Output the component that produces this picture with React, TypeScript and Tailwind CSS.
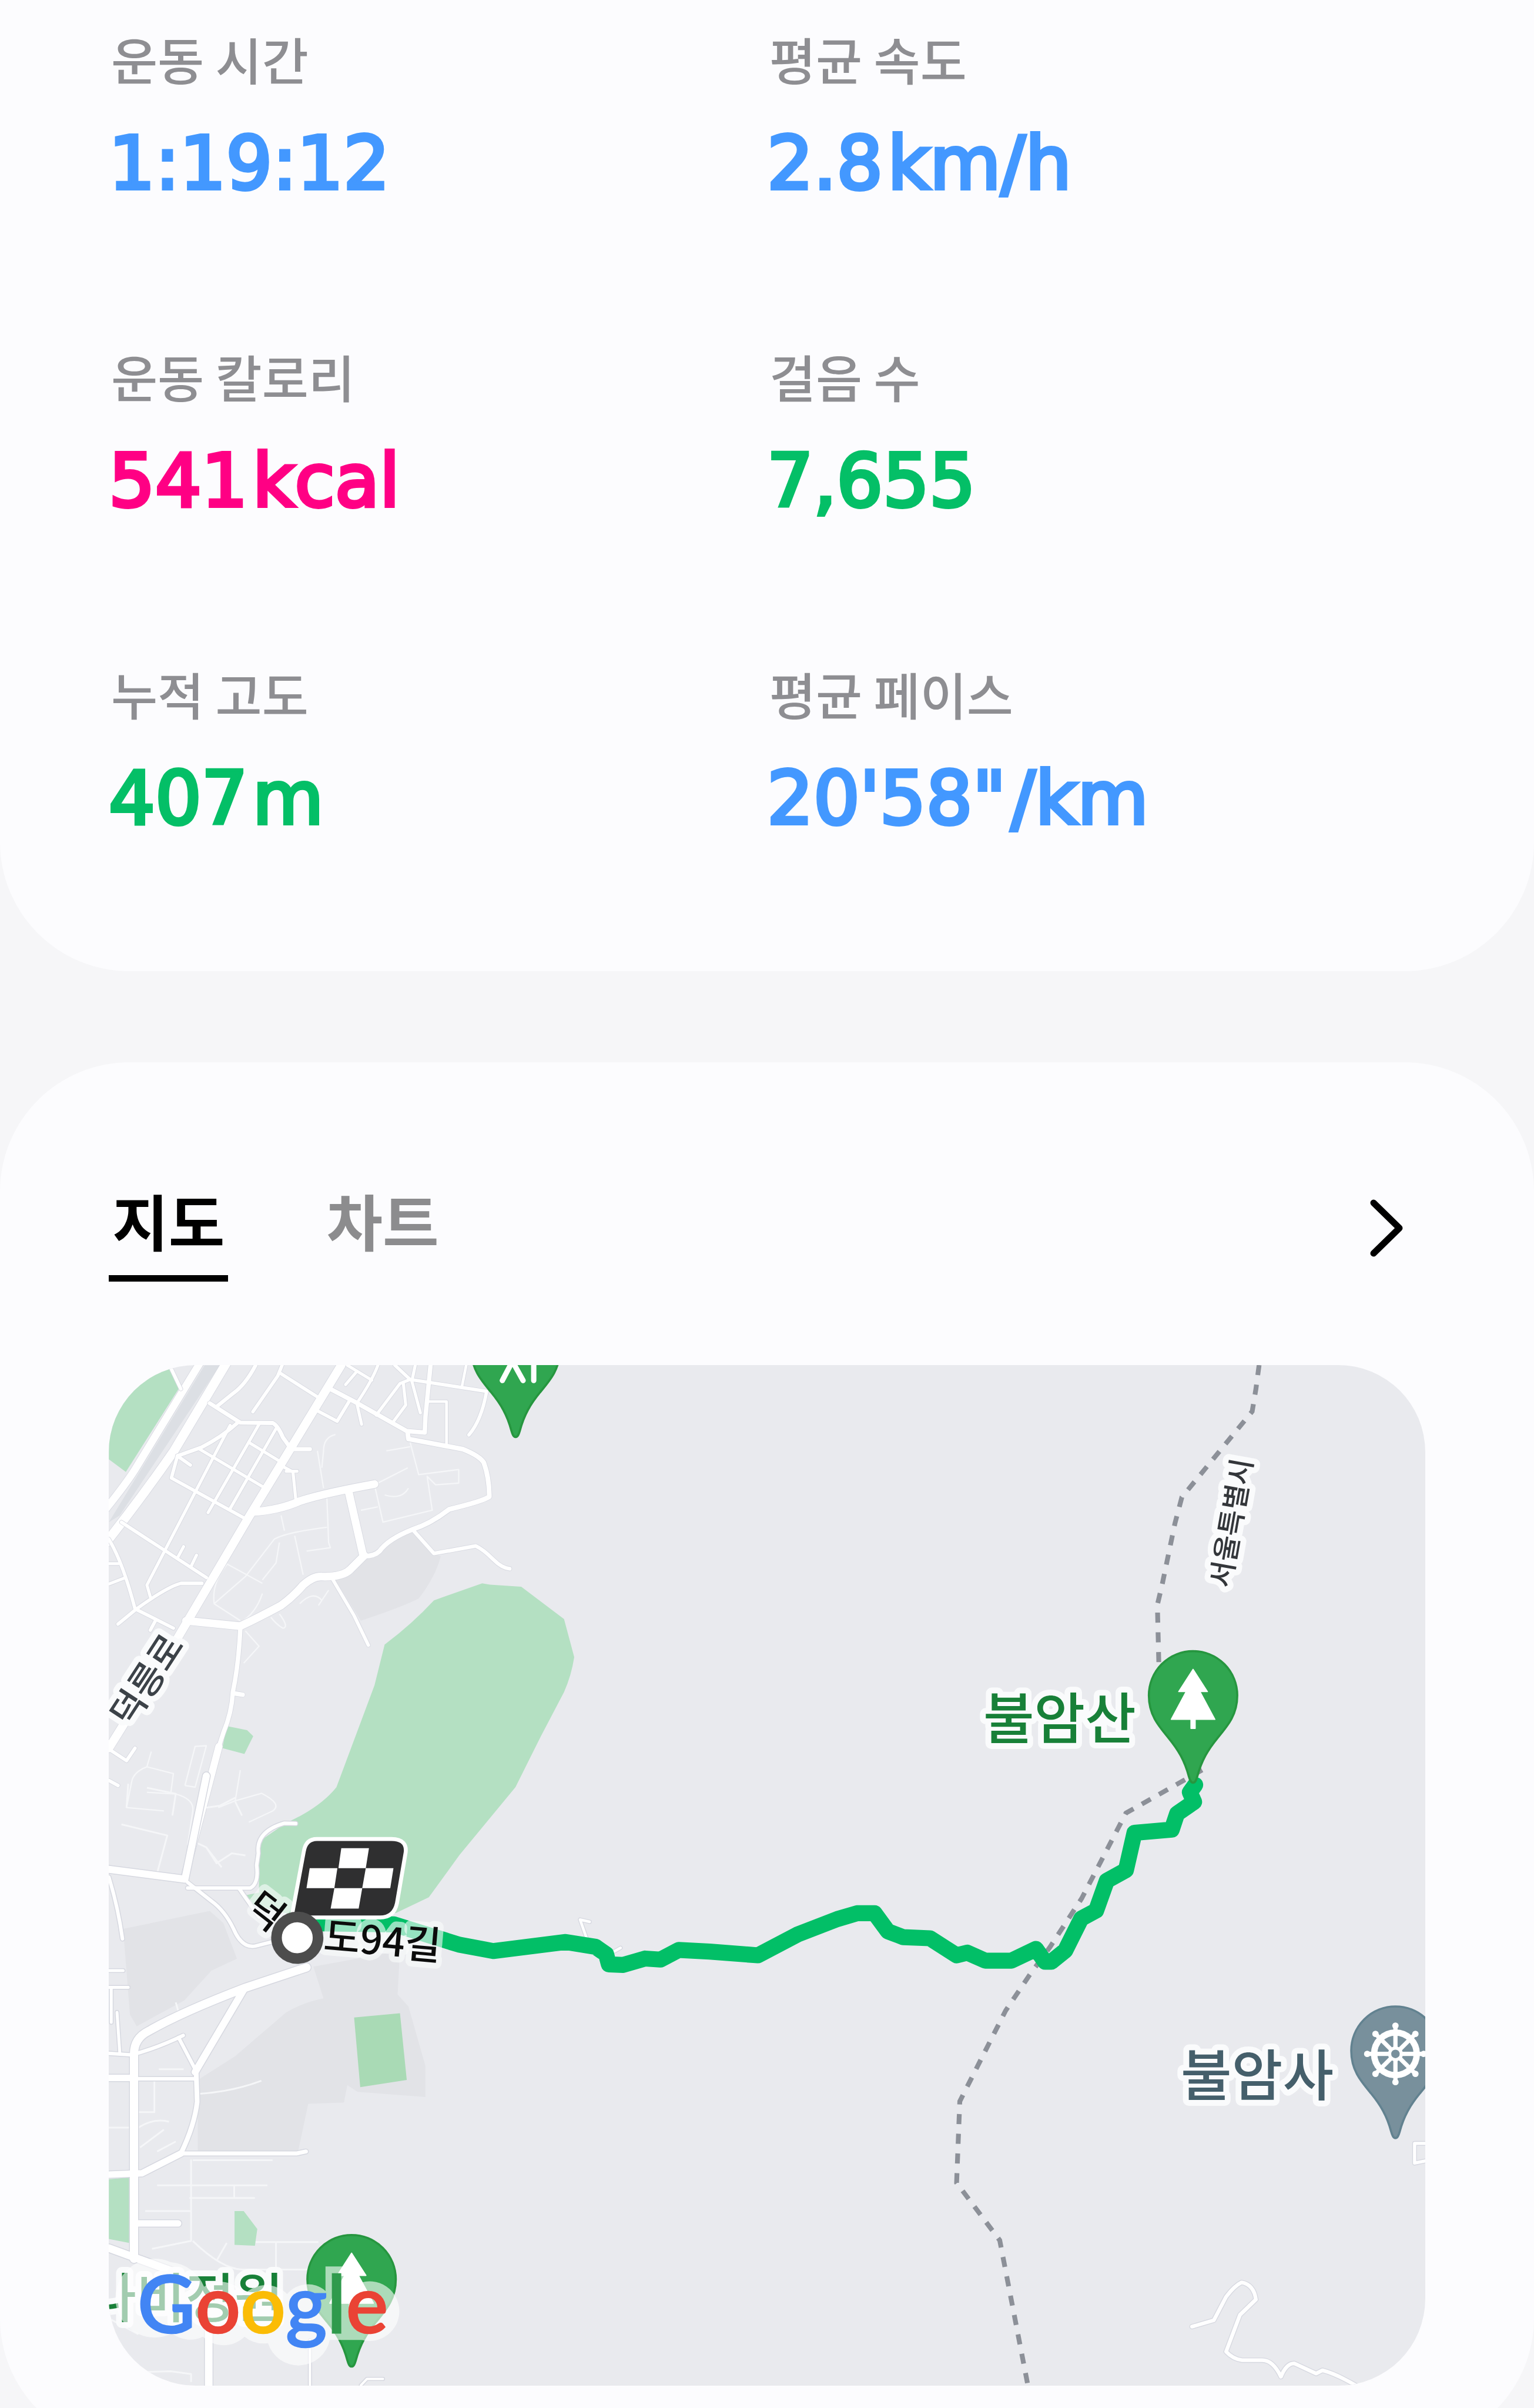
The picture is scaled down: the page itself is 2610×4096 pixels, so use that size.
import { useState } from "react";

type Road = { d: string; w: number };

const stats = [
  { label: "운동 시간", value: "1:19:12", color: "text-[#4398ff]" },
  { label: "평균 속도", value: "2.8", unit: "km/h", color: "text-[#4398ff]" },
  { label: "운동 칼로리", value: "541", unit: "kcal", color: "text-[#ff0084]" },
  { label: "걸음 수", value: "7,655", color: "text-[#04bf67]" },
  { label: "누적 고도", value: "407", unit: "m", color: "text-[#04bf67]" },
  { label: "평균 페이스", value: "20'58\"", unit: "/km", color: "text-[#4398ff]" },
];

const tabs = [
  { id: "map", label: "지도" },
  { id: "chart", label: "차트" },
];

const northRoads: Road[] = [
  { d: "M220 45L250 108", w: 10 },
  { d: "M470 38Q440 95 405 120L355 160", w: 11 },
  { d: "M548 38L535 70L462 175", w: 10 },
  { d: "M540 60L650 130", w: 10 },
  { d: "M335 150L425 207L520 208Q535 215 550 250L575 285H630", w: 12 },
  { d: "M420 205Q370 250 310 280L240 305", w: 11 },
  { d: "M395 215L345 310L150 685L160 720", w: 9 },
  { d: "M480 212L330 472", w: 9 },
  { d: "M530 225L395 460", w: 9 },
  { d: "M450 265L540 320", w: 9 },
  { d: "M305 285L490 395", w: 9 },
  { d: "M240 305L222 370L435 487", w: 10 },
  { d: "M240 305L278 332", w: 10 },
  { d: "M75 500L325 663", w: 10 },
  { d: "M258 572L240 605M296 597L280 630", w: 9 },
  { d: "M548 335L580 352L588 430M560 350H592", w: 9 },
  { d: "M648 170L710 203L745 145", w: 10 },
  { d: "M690 108L770 150L915 232L968 236L970 190L985 38", w: 13 },
  { d: "M740 38L812 82M765 60L735 95M830 38Q815 80 768 150L782 212", w: 9 },
  { d: "M880 38L925 80L1150 115Q1135 200 1098 243", w: 10 },
  { d: "M925 80L895 92L825 185M905 92L912 155L875 205", w: 9 },
  { d: "M940 38L930 85L955 178", w: 9 },
  { d: "M980 145H1032V268M1090 38L1078 98", w: 8 },
  { d: "M935 525L995 592L1118 570Q1140 580 1170 610Q1195 635 1218 637", w: 11 },
  { d: "M698 670L760 775L802 862", w: 10 },
  { d: "M38 550Q80 620 115 755L228 812M175 790L160 818", w: 10 },
  { d: "M65 800L120 755Q210 690 250 680H312", w: 10 },
  { d: "M38 622H65M38 682L82 665", w: 9 },
  { d: "M38 1168L90 1202L115 1165M38 1260L65 1275", w: 10 },
  { d: "M425 812Q420 920 403 1000Q400 1060 375 1120L362 1160M403 1003L432 1008", w: 13 },
  { d: "M918 240L920 255L1080 285Q1130 305 1142 325Q1158 370 1158 425Q1140 438 1040 462Q985 505 930 522Q860 550 835 585Q820 600 790 600", w: 14 },
  { d: "M460 470Q540 465 600 438Q670 415 820 388", w: 23 },
  { d: "M745 415L786 595", w: 23 },
  { d: "M265 790L425 806Q480 780 545 745Q580 720 610 685Q640 658 665 660Q725 662 748 640L790 598", w: 23 },
  { d: "M722 38L575 280L450 485L235 850L38 1165", w: 25 },
  { d: "M362 1160L262 1540", w: 21 },
];

const southRoads: Road[] = [
  { d: "M270 248L340 295Q380 320 405 365Q430 415 470 408L530 395", w: 6 },
  { d: "M270 262H455Q480 250 473 205L478 175Q470 120 555 99L588 100", w: 6 },
  { d: "M422 264L480 335", w: 6 },
  { d: "M38 235Q65 310 78 390", w: 6 },
  { d: "M38 470H80M38 512H95M45 512V600M62 575L70 675", w: 5 },
  { d: "M38 678L105 682Q180 665 257 633M243 638L292 718M120 742H295", w: 6 },
  { d: "M250 930H590L618 925", w: 7 },
  { d: "M780 1513L798 1497H845M630 1400V1513", w: 4 },
  { d: "M295 725L298 800Q290 860 250 930", w: 8 },
  { d: "M38 740H112M120 1106H242", w: 11 },
  { d: "M250 930L135 980L38 983", w: 11 },
  { d: "M38 215L262 240L325 -20", w: 12 },
  { d: "M435 518L292 725", w: 12 },
  { d: "M38 1168L230 1228L325 1290L332 1350V1520", w: 13 },
  { d: "M620 462L440 513Q250 575 155 622Q112 640 112 680V1195", w: 14 },
];

const southPaths =
  "M75 102L210 130L180 225M95 0L90 60M150 10L235 25L225 80M325 60L365 55L410 35M410 45L430 80M300 150L325 160L370 210M325 160L355 200L400 175L440 180M235 550L245 580M300 780Q400 775 487 747M185 718H258M172 742V826H125M125 865Q170 840 215 850M130 915L200 870M180 925L235 900M38 865H120M280 945V1150L165 1170M180 1010H505M275 1042H468M407 1012V1040M285 1150Q370 1220 430 1222H650M355 1200L385 1155M470 1153H655M530 1153V1290M285 947H520M38 1345L125 1385M125 1480L220 1478L280 1485V1505M145 1075H278";

const northPaths =
  "M705 242Q670 250 670 290L665 340M652 290L670 400M680 430L685 560L690 575L620 585M680 515Q560 530 525 550L440 660M540 560L530 620L490 670M545 480L555 525M585 540L610 655M380 620L490 680M385 625Q340 680 348 740L425 790M348 740L440 660M490 710Q470 770 425 795M925 265L950 360L1068 345V385L1000 390L975 365L990 465L845 500L820 390L918 340M855 290L925 278M780 465L830 455M850 420Q900 435 920 400M665 730Q640 700 600 740M655 745L685 700M440 820L480 865L435 915M540 770Q570 810 550 812Q530 800 515 780M163 1175L150 1220L228 1240L220 1300M150 1220Q110 1235 105 1265L90 1340L200 1350M262 1275L292 1160L325 1158L292 1280L262 1275M150 1295L235 1300Q290 1315 285 1350L270 1450M425 1230L410 1320L360 1340M410 1320L488 1298Q550 1330 520 1350L450 1383";

const trail = [
  "M2364 2564L2358 2609L2351 2651L2219 2812L2206 2861L2182 2976L2173 3014L2176 3135",
  "M2257 3324L2114 3405L2031 3565L1971 3657L1933 3709L1888 3776L1802 3946L1796 4099L1877 4207L1930 4480",
];

const route =
  "M600 3612L740 3614L862 3652L926 3664L1062 3647L1118 3656L1138 3670L1143 3689L1170 3690L1211 3678L1240 3680L1274 3662L1332 3665L1423 3672L1497 3633L1572 3604L1609 3593L1642 3593L1667 3627L1696 3638L1746 3640L1796 3672L1816 3667L1850 3682L1899 3682L1945 3660L1962 3684L1974 3684L2000 3663L2030 3603L2058 3588L2078 3532L2114 3512L2130 3442L2200 3436L2210 3406L2242 3384L2234 3366L2244 3352";

const pinShape =
  "M0 0C-4 0-6-5-8-12C-16-42-28-62-46-84C-66-108-83-128-83-164A83 83 0 0 1 83-164C83-128 66-108 46-84C28-62 16-42 8-12C6-5 4 0 0 0Z";

function Roads({ roads }: { roads: Road[] }) {
  return (
    <g fill="none" strokeLinecap="round" strokeLinejoin="round">
      <g stroke="#d6d8e0">
        {roads.map((road) => (
          <path key={road.d} d={road.d} strokeWidth={road.w + 3} />
        ))}
      </g>
      <g stroke="#ffffff">
        {roads.map((road) => (
          <path key={road.d} d={road.d} strokeWidth={road.w} />
        ))}
      </g>
    </g>
  );
}

function TreePin({ x, y }: { x: number; y: number }) {
  return (
    <g transform={`translate(${x} ${y})`}>
      <path d={pinShape} fill="#30a650" stroke="#26963f" strokeWidth="4" />
      <path d="M0-213L27-171H13L41-119H4V-102H-4V-119H-41L-13-171H-27Z" fill="#fff" stroke="#fff" strokeWidth="2" strokeLinejoin="round" />
    </g>
  );
}

function TemplePin({ x, y }: { x: number; y: number }) {
  const angles = [0, 45, 90, 135, 180, 225, 270, 315];
  return (
    <g transform={`translate(${x} ${y})`}>
      <path d={pinShape} fill="#78909c" stroke="#628290" strokeWidth="4" />
      <g transform="translate(0 -158)">
        <circle r="40" fill="none" stroke="#fff" strokeWidth="12" />
        {angles.map((angle) => (
          <g key={angle} transform={`rotate(${angle})`}>
            <path d="M0 0V-54" stroke="#fff" strokeWidth="8" />
            <circle cy="-53" r="6" fill="#fff" />
          </g>
        ))}
        <circle r="14" fill="#fff" />
        <circle r="8" fill="#78909c" />
      </g>
    </g>
  );
}

function FinishFlag() {
  return (
    <g transform="translate(440 3400) scale(.3333)">
      <path
        d="M465 172H885Q968 172 952 245L905 520Q890 592 820 592H335L402 232Q412 172 465 172Z"
        fill="#2f2f30"
        stroke="#fff"
        strokeWidth="44"
        strokeLinejoin="round"
        paintOrder="stroke"
      />
      <path
        d="M602 213H758L740 325H586ZM424 325H580L563 438H406ZM740 325H896L878 438H720ZM563 438H720L700 553H542Z"
        fill="#fff"
      />
    </g>
  );
}

function GoogleMark() {
  return (
    <g>
      {/* light halo that keeps the mark readable over the map */}
      <g fill="#fff" opacity=".6">
        <path d="M321 4248a74 74 0 0 1 62 46a56 56 0 0 1 76 14a56 56 0 0 1 80 0a50 50 0 0 1 72-6V4256h48v40a56 56 0 1 1 20 98h-60a60 60 0 0 1-116 6a56 56 0 0 1-44-12a56 56 0 0 1-78 0a56 56 0 0 1-58-6a74 74 0 1 1-2-134Z" />
      </g>
      <text x="258" y="4380" fontSize="149" fontWeight="500" className="font-[Lato,sans-serif]" strokeWidth="3">
        <tspan fill="#4285f4" stroke="#4285f4">G</tspan>
        <tspan fill="#ea4335" stroke="#ea4335">o</tspan>
        <tspan fill="#fbbc05" stroke="#fbbc05">o</tspan>
        <tspan fill="#4285f4" stroke="#4285f4">g</tspan>
        <tspan fill="#2f9a4c" stroke="#2f9a4c">l</tspan>
        <tspan fill="#ea4335" stroke="#ea4335">e</tspan>
      </text>
    </g>
  );
}

function RouteMap() {
  return (
    <svg
      viewBox="204 2564 2472 1916"
      role="img"
      aria-label="지도"
      className="block h-auto w-full bg-[#e9eaee] font-['Noto_Sans_CJK_KR',sans-serif]"
    >
      {/* north-west blocks */}
      <g transform="translate(180 2540) scale(.6378)">
        <path d="M705 670L760 645L790 600L935 525L995 592L1015 600Q1000 660 950 725Q900 750 780 790Z" fill="#e2e3e7" />
        <path d="M38 315V200L110 60L215 45L245 105L88 352Z" fill="#b4e0c2" />
        <path
          d="M1137 680L1160 684L1252 690L1378 785L1408 897Q1400 950 1378 1000L1310 1130L1235 1280L1070 1480L980 1604L884 1650L660 1678L455 1623L430 1600L480 1590V1440L560 1385Q660 1340 708 1280L820 980L850 860Q930 800 995 730Z"
          fill="#b4e0c2"
        />
        <path d="M385 1100L445 1112L463 1130L437 1182L372 1165Z" fill="#b4e0c2" />
        <path d="M320 38H365L70 480L38 500Z" fill="#dcdfe4" />
        <path d={northPaths} fill="none" stroke="#f5f6f8" strokeWidth="4" strokeLinejoin="round" />
        <Roads
          roads={[
            { d: "M307 30L115 345Q90 385 30 460", w: 22 },
            { d: "M385 30L230 290Q140 420 30 560", w: 27 },
          ]}
        />
        <Roads roads={northRoads} />
      </g>

      {/* south-west blocks */}
      <g transform="translate(180 3350) scale(.6378 .7462)" className="[&_path]:[vector-effect:non-scaling-stroke]">
        <path d="M80 365L335 320L375 350L415 440L340 470L260 545L120 610L100 580Z" fill="#e2e3e7" />
        <path
          d="M640 460L670 540Q610 550 560 575L410 685L300 745V925H595L625 805L730 802L740 758L770 775L970 788V710L920 560L888 530L895 420Z"
          fill="#e2e3e7"
        />
        <path d="M760 588L895 577L915 745L778 763Z" fill="#a9dab5" />
        <path d="M38 995L98 990V1155L38 1145ZM408 1075H435L475 1120L468 1162L408 1160Z" fill="#b4e0c2" />
        <path d={southPaths} fill="none" stroke="#f5f6f8" strokeWidth="3" strokeLinejoin="round" />
        <Roads roads={southRoads} />
      </g>

      {/* mountain roads */}
      <Roads
        roads={[
          {
            d: "M2238 4369L2279 4357L2302 4313Q2318 4292 2331 4286Q2354 4290 2358 4318L2328 4347L2302 4416Q2315 4430 2332 4432H2370Q2390 4432 2405 4463Q2415 4438 2430 4438L2471 4457L2483 4451Q2510 4458 2550 4482",
            w: 7,
          },
          { d: "M2690 4025H2656V4062L2690 4055", w: 6 },
          { d: "M1107 3609L1089 3605L1102 3642M1165 3658L1140 3672", w: 5 },
        ]}
      />

      {trail.map((d) => (
        <path key={d} d={d} fill="none" stroke="#8c9098" strokeWidth="9" strokeDasharray="19 18" />
      ))}
      <path d={route} fill="none" stroke="#02bf67" strokeWidth="30" strokeLinejoin="round" strokeLinecap="round" />

      {/* place names */}
      <g stroke="#fafbfc" strokeLinejoin="round" paintOrder="stroke" strokeWidth="22">
        <text transform="translate(274 3154) rotate(-57)" y="26" textAnchor="middle" fontSize="68" fontWeight="500" fill="#3c4248">덕릉로</text>
        <text transform="translate(2311 2860) rotate(-80)" y="20" textAnchor="middle" fontSize="53" fontWeight="500" fill="#33363a">서울특별시</text>
        <text x="1846" y="3266" fontSize="104" fontWeight="500" fill="#188038">불암산</text>
        <text x="2217" y="3936" fontSize="104" fontWeight="500" fill="#455f6b">불암사</text>
        <text x="532" y="4352" textAnchor="end" fontSize="100" fontWeight="500" fill="#188038">나비정원</text>
        <g fill="#0c0c0c" strokeOpacity=".6" fontWeight="500">
          <text transform="translate(500 3588) rotate(38)" y="27" textAnchor="middle" fontSize="72">덕</text>
          <text transform="translate(606 3662) rotate(5)" fontSize="74">도94길</text>
        </g>
      </g>

      <FinishFlag />
      <circle cx="558" cy="3639" r="39" fill="#fff" stroke="#4d4d4d" strokeWidth="20" />

      <g transform="translate(968 2699)">
        <path d={pinShape} fill="#30a650" stroke="#26963f" strokeWidth="4" />
        <path d="M-25-106L-6-142L14-106M34-150V-106" fill="none" stroke="#fff" strokeWidth="10" strokeLinecap="round" />
      </g>
      <TreePin x={2240} y={3348} />
      <TemplePin x={2620} y={4015} />
      <TreePin x={660} y={4444} />
      <GoogleMark />
    </svg>
  );
}

export default function App() {
  const [active, setActive] = useState("map");

  return (
    <main className="h-screen overflow-hidden bg-[#f6f6f8] font-['Noto_Sans_CJK_KR',sans-serif]">
      <section className="rounded-b-[220px] bg-[#fcfcfe] px-[185px] pt-[44px] pb-[222px]">
        <dl className="grid grid-cols-2 gap-y-[234px]">
          {stats.map((stat) => (
            <div key={stat.label} className="flex flex-col gap-[50px]">
              <dt className="pl-1 text-[86px] leading-[112px] font-medium text-[#8e8e92]">{stat.label}</dt>
              <dd className={`flex gap-2 font-['DejaVu_Sans',sans-serif] text-[124px] leading-[144px] [-webkit-text-stroke:6px_currentColor] ${stat.color}`}>
                <span>{stat.value}</span>
                {stat.unit && <span>{stat.unit}</span>}
              </dd>
            </div>
          ))}
        </dl>
      </section>

      <section className="mt-[155px] rounded-[220px] bg-[#fcfcfe] px-[185px] pt-[198px] pb-[105px]">
        <div className="flex items-start justify-between">
          <div role="tablist" className="flex gap-[161px]">
            {tabs.map((tab) => (
              <button
                key={tab.id}
                role="tab"
                aria-selected={active === tab.id}
                onClick={() => setActive(tab.id)}
                className={`border-b-[11px] px-1.5 pb-6 text-[104px] leading-[140px] font-bold ${
                  active === tab.id ? "border-black text-black" : "border-transparent text-[#8c8c8e]"
                }`}
              >
                {tab.label}
              </button>
            ))}
          </div>
          <button aria-label="자세히 보기" className="mt-8 mr-9">
            <svg viewBox="0 0 60 104" className="h-[104px] w-[60px]" fill="none" stroke="#000" strokeWidth="11" strokeLinecap="round" strokeLinejoin="round">
              <path d="M8 9L52 52L8 95" />
            </svg>
          </button>
        </div>
        <div className="mt-[142px] overflow-hidden rounded-[148px]">
          <RouteMap />
        </div>
      </section>
    </main>
  );
}
